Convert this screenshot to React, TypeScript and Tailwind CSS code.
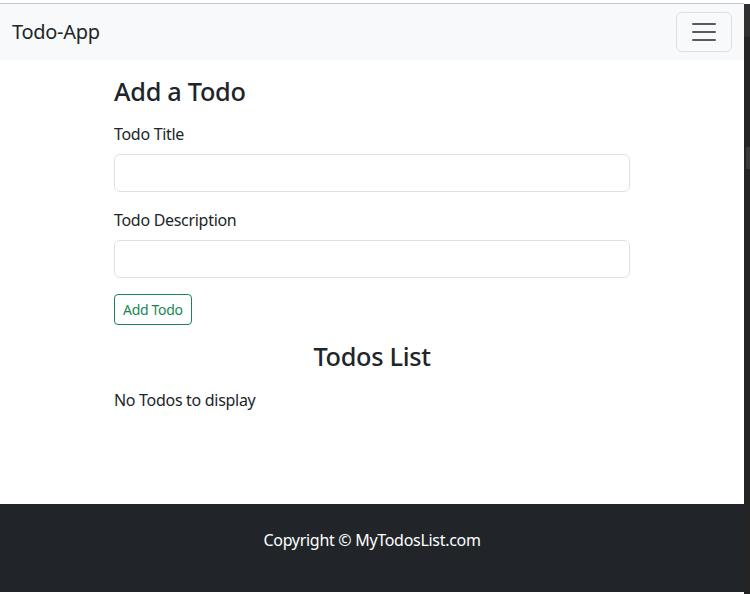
import React from "react";

export default function App() {
  return (
    <div className="flex w-[750px] h-[594px] overflow-hidden bg-white tracking-[-0.3px]" style={{ fontFamily: '"Noto Sans", "Liberation Sans", sans-serif' }}>
      <div className="flex flex-col w-[744px] h-[594px] text-[#212529]">
        <div className="h-[3px] bg-white" />
        <div className="h-px bg-[#c9c9d6]" />
        <nav className="h-[56px] bg-[#f8f9fa] flex items-center justify-between px-3">
          <span className="text-[20px] leading-[30px]">Todo-App</span>
          <button className="w-[56px] h-[40px] border border-[rgba(0,0,0,0.1)] rounded-[6px] flex items-center justify-center">
            <svg width="30" height="30" viewBox="0 0 30 30">
              <path d="M4 7h22M4 15h22M4 23h22" stroke="rgba(33,37,41,0.75)" strokeWidth="2" strokeLinecap="round" />
            </svg>
          </button>
        </nav>
        <main className="h-[444px] w-[516px] mx-auto">
          <h3 className="text-[25.3px] leading-[30.4px] font-medium mt-4 mb-4">Add a Todo</h3>
          <div className="mb-4">
            <label className="block text-[16px] leading-[24px] mb-2">Todo Title</label>
            <input className="block w-full h-[38px] border border-[#dee2e6] rounded-[6px]" />
          </div>
          <div className="mb-4">
            <label className="block text-[16px] leading-[24px] mb-2">Todo Description</label>
            <input className="block w-full h-[38px] border border-[#dee2e6] rounded-[6px]" />
          </div>
          <button className="h-[31px] px-2 border border-[#198754] text-[#198754] rounded-[4px] text-[14px] leading-[21px]">Add Todo</button>
          <h3 className="text-[25.3px] leading-[30.4px] font-medium text-center mt-4 mb-4">Todos List</h3>
          <p className="text-[16px] leading-[24px]">No Todos to display</p>
        </main>
        <footer className="h-[88px] bg-[#212529] text-white text-center pt-6 text-[16px] leading-[24px]">
          Copyright © MyTodosList.com
        </footer>
        <div className="h-[2px] bg-white" />
      </div>
      <div className="w-[6px] h-[594px] flex flex-col bg-[#242424]">
        <div className="h-[4px] bg-white" />
        <div className="h-[33px] bg-[#303030]" />
        <div className="h-[110px]" />
        <div className="h-[22px] bg-[#3a3a3a] ml-[2px]" />
        <div className="flex-1" />
      </div>
    </div>
  );
}
